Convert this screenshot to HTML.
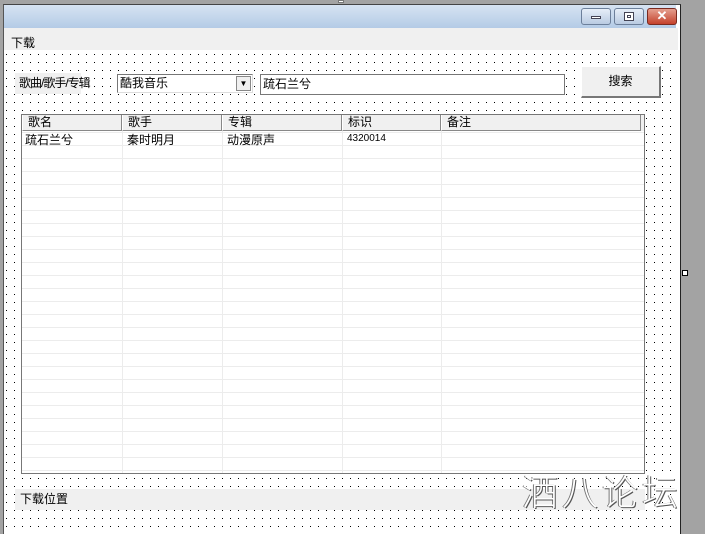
<!DOCTYPE html>
<html><head><meta charset="utf-8"><style>
*{margin:0;padding:0;box-sizing:border-box}
body{width:705px;height:534px;background:#a3a3a3;position:relative;overflow:hidden;font-family:"Liberation Sans","Noto Sans CJK SC",sans-serif;font-size:12px;color:#000}
.a{position:absolute;white-space:nowrap}
#win{left:3px;top:4px;width:678px;height:530px;background:#fff;border-left:1px solid #555;border-right:1px solid #222;border-top:1px solid #444}
#title{left:4px;top:5px;width:672px;height:23px;background:linear-gradient(#d6e3f2,#b4cbe6)}
#menu{left:4px;top:28px;width:674px;height:22px;background:#f0f0f0}
#client{left:4px;top:50px;width:674px;height:484px;background-color:#fff;background-image:radial-gradient(circle at 0.5px 0.5px,#000 0.5px,transparent 0.75px);background-size:8px 8px;background-position:2px 4px}
.tb{height:17px;top:8px;border:1px solid #6c7f9a;border-radius:3px;background:linear-gradient(#e6eef8,#b9cbe2)}
.gray{background:#f0f0f0}
.hd{top:115px;height:16px;background:#f0f0f0;border-right:1px solid #888;border-bottom:1px solid #888;border-left:1px solid #fff;padding-left:5px;line-height:15px}
</style></head><body>
<div id="win" class="a"></div>
<div id="client" class="a"></div>
<div id="title" class="a"></div>
<div class="a tb" style="left:581px;width:30px"><div class="a" style="left:9px;top:7px;width:10px;height:3px;background:#fff;border:1px solid #445"></div></div>
<div class="a tb" style="left:614px;width:30px"><div class="a" style="left:9px;top:3px;width:10px;height:9px;border:1px solid #445;background:#fff"><div class="a" style="left:2px;top:2px;width:4px;height:3px;border:1px solid #445"></div></div></div>
<div class="a tb" style="left:647px;width:30px;background:linear-gradient(#e5a08f,#c4412c);border-color:#7a2a20;color:#fff;font-weight:bold;text-align:center;line-height:14px;font-size:13px">✕</div>
<div id="menu" class="a"></div>
<div class="a" style="left:11px;top:34px">下载</div>
<div class="a gray" style="left:15px;top:73px;width:66px;height:21px;line-height:21px;padding-left:4px;letter-spacing:-1px">歌曲/歌手/专辑</div>
<div class="a" style="left:117px;top:74px;width:136px;height:19px;background:#fff;border:1px solid #777;border-right-color:#ddd;border-bottom-color:#ddd;line-height:17px;padding-left:2px">酷我音乐
<div class="a" style="right:1px;top:1px;width:15px;height:15px;background:#f0f0f0;border:1px solid #888;font-size:8px;text-align:center;line-height:14px">▼</div></div>
<div class="a" style="left:260px;top:74px;width:305px;height:21px;background:#fff;border:1px solid #777;line-height:19px;padding-left:2px">疏石兰兮</div>
<div class="a" style="left:581px;top:66px;width:80px;height:32px;background:#f0f0f0;border:1px solid #fff;border-right:2px solid #777;border-bottom:2px solid #777;text-align:center;line-height:29px">搜索</div>
<div class="a" style="left:21px;top:114px;width:624px;height:360px;background:#fff;border:1px solid #777;overflow:hidden;
background-image:linear-gradient(#ececec 1px,transparent 1px);background-size:100% 13px;background-position:0 30px"></div>
<div class="a" style="left:122px;top:131px;width:1px;height:342px;background:#ececec"></div>
<div class="a" style="left:222px;top:131px;width:1px;height:342px;background:#ececec"></div>
<div class="a" style="left:342px;top:131px;width:1px;height:342px;background:#ececec"></div>
<div class="a" style="left:441px;top:131px;width:1px;height:342px;background:#ececec"></div>
<div class="a hd" style="left:22px;width:100px">歌名</div>
<div class="a hd" style="left:122px;width:100px">歌手</div>
<div class="a hd" style="left:222px;width:120px">专辑</div>
<div class="a hd" style="left:342px;width:99px">标识</div>
<div class="a hd" style="left:441px;width:200px">备注</div>
<div class="a" style="left:641px;top:115px;width:3px;height:16px;background:#f0f0f0"></div>
<div class="a" style="left:25px;top:131px">疏石兰兮</div>
<div class="a" style="left:127px;top:131px">秦时明月</div>
<div class="a" style="left:227px;top:131px">动漫原声</div>
<div class="a" style="left:347px;top:133px;font-size:10px">4320014</div>
<div class="a gray" style="left:15px;top:489px;width:630px;height:21px;line-height:21px;padding-left:5px">下载位置</div>
<div class="a" style="left:522px;top:467px;font-size:36px;color:#fff;text-shadow:1px 1px 0 #555,-1px 0 0 #777;letter-spacing:4px;font-family:'Noto Sans CJK SC',sans-serif;font-weight:300;line-height:46px">酒八论坛</div>
<div class="a" style="left:682px;top:270px;width:6px;height:6px;background:#fff;border:1px solid #000"></div>
<div class="a" style="left:338px;top:0;width:6px;height:3px;background:#fff;border:1px solid #777"></div>
</body></html>
